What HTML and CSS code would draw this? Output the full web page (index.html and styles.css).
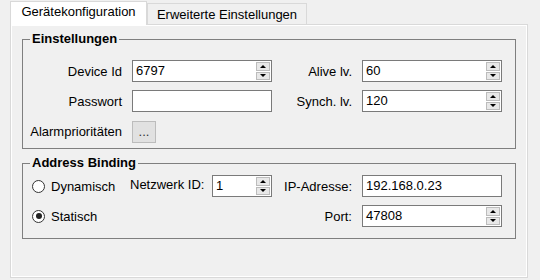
FILE: index.html
```html
<!DOCTYPE html>
<html lang="de">
<head>
<meta charset="UTF-8" />
<title>Gerätekonfiguration</title>
<link rel="stylesheet" href="styles.css">
</head>
<body>
<div class="tabs">
  <div class="tab active">Gerätekonfiguration</div>
  <div class="tab">Erweiterte Einstellungen</div>
</div>
<div class="page">
  <fieldset class="group settings">
    <legend>Einstellungen</legend>

    <label class="caption">Device Id</label>
    <div class="field">
      <span class="value">6797</span>
      <span class="spin"><span class="up"></span><span class="down"></span></span>
    </div>

    <label class="caption">Alive lv.</label>
    <div class="field">
      <span class="value">60</span>
      <span class="spin"><span class="up"></span><span class="down"></span></span>
    </div>

    <label class="caption">Passwort</label>
    <div class="field"><span class="value"></span></div>

    <label class="caption">Synch. lv.</label>
    <div class="field">
      <span class="value">120</span>
      <span class="spin"><span class="up"></span><span class="down"></span></span>
    </div>

    <label class="caption">Alarmprioritäten</label>
    <button class="dots" type="button">...</button>
  </fieldset>

  <fieldset class="group binding">
    <legend>Address Binding</legend>

    <label class="radio"><span class="circle"></span>Dynamisch</label>
    <label class="net-caption">Netzwerk ID:</label>
    <div class="field">
      <span class="value">1</span>
      <span class="spin"><span class="up"></span><span class="down"></span></span>
    </div>
    <label class="caption">IP-Adresse:</label>
    <div class="field"><span class="value">192.168.0.23</span></div>

    <label class="radio checked"><span class="circle"></span>Statisch</label>
    <label class="caption port">Port:</label>
    <div class="field">
      <span class="value">47808</span>
      <span class="spin"><span class="up"></span><span class="down"></span></span>
    </div>
  </fieldset>
</div>
</body>
</html>
```

FILE: styles.css
```css
body {
  margin: 0;
  padding: 1px 0 0 10px;
  background: #f0f0f0;
  font: 13px "Liberation Sans", Arial, sans-serif;
  color: #000;
}
.tabs {
  display: flex;
  align-items: flex-end;
  height: 23px;
  position: relative;
  z-index: 1;
}
.tab {
  box-sizing: border-box;
  width: 160px;
  height: 21px;
  padding-top: 3px;
  line-height: 16px;
  text-align: center;
  border: 1px solid #d9d9d9;
  border-bottom: none;
  background: #f0f0f0;
}
.tab.active {
  width: 137px;
  height: 24px;
  padding-top: 2px;
  margin-bottom: -1px;
  background: #fff;
}
.page {
  box-sizing: border-box;
  width: 518px;
  height: 254px;
  padding: 6px 11px 0;
  border: 1px solid #d9d9d9;
  box-shadow: inset 0 0 0 1px #fff;
}
.group {
  margin: 0;
  border: 1px solid #7f7f7f;
  display: grid;
  align-items: center;
}
.group legend {
  margin-left: 7px;
  padding: 0 2px;
  font-weight: bold;
  line-height: 16px;
}
.settings {
  padding: 13px 0 6px 0;
  grid-template-columns: 99px 140px 70px 140px;
  grid-auto-rows: 22px;
  column-gap: 10px;
  row-gap: 8px;
}
.binding {
  margin-top: 6px;
  padding: 4px 0 11px 9px;
  grid-template-columns: 98px 82px 60px 90px 140px;
  grid-auto-rows: 22px;
  row-gap: 8px;
}
.binding legend {
  margin-left: -2px;
}
.caption {
  text-align: right;
}
.binding .caption {
  padding-right: 10px;
}
.binding .port {
  grid-column: 4;
}
.net-caption {
  margin-top: -3px;
}
.field {
  box-sizing: border-box;
  height: 22px;
  display: flex;
  justify-content: space-between;
  border: 1px solid #7a7a7a;
  background: #fff;
  padding-left: 3px;
}
.value {
  line-height: 20px;
}
.spin {
  width: 14px;
  margin: 1px;
  display: flex;
  flex-direction: column;
  gap: 1px;
}
.spin span {
  flex: 1;
  display: flex;
  align-items: center;
  justify-content: center;
  background: #e8e8e8;
  border: 1px solid #bcbcbc;
}
.spin .up::after,
.spin .down::after {
  content: "";
  border-left: 3px solid transparent;
  border-right: 3px solid transparent;
}
.spin .up::after {
  border-bottom: 3px solid #000;
}
.spin .down::after {
  border-top: 3px solid #000;
}
.dots {
  width: 24px;
  height: 22px;
  margin-top: 1px;
  padding: 0;
  border: 1px solid #bcbcbc;
  background: #e1e1e1;
  font: 13px "Liberation Sans", Arial, sans-serif;
  color: #333;
  justify-self: start;
}
.radio {
  display: flex;
  align-items: center;
  gap: 6px;
}
.circle {
  box-sizing: border-box;
  width: 13px;
  height: 13px;
  border: 1px solid #333;
  border-radius: 50%;
  background: #fff;
  display: flex;
  align-items: center;
  justify-content: center;
}
.radio.checked .circle::after {
  content: "";
  width: 6px;
  height: 6px;
  border-radius: 50%;
  background: #222;
}
```
